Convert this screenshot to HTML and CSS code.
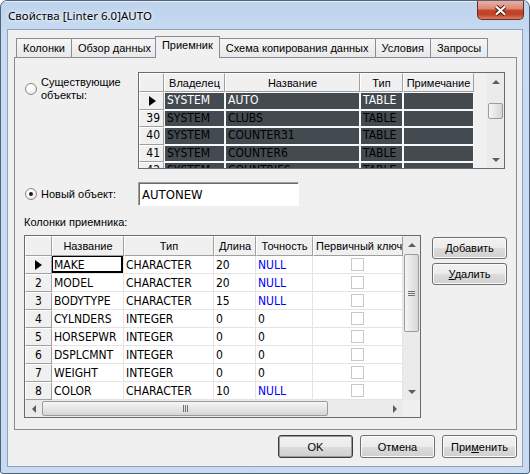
FILE: index.html
```html
<!DOCTYPE html>
<html>

<head>
  <meta charset="utf-8">
  <title>Свойства [Linter 6.0]AUTO</title>
  <link rel="stylesheet" href="styles.css">
</head>

<body>
  <div class="window">
    <div class="titlebar">
      <span class="title">Свойства [Linter 6.0]AUTO</span>
      <div class="close-btn">
        <svg width="13" height="11" viewBox="0 0 13 11">
          <path d="M2 1.5 L11 9.5 M11 1.5 L2 9.5" stroke="#4e1a12" stroke-width="4.2" />
          <path d="M2 1.5 L11 9.5 M11 1.5 L2 9.5" stroke="#fff" stroke-width="2.2" />
        </svg>
      </div>
    </div>

    <div class="client">
      <div class="tabs">
        <div class="tab">Колонки</div>
        <div class="tab">Обзор данных</div>
        <div class="tab active">Приемник</div>
        <div class="tab">Схема копирования данных</div>
        <div class="tab">Условия</div>
        <div class="tab">Запросы</div>
      </div>

      <div class="panel">
        <!-- existing objects -->
        <div class="source-row">
          <label class="radio-label two-lines">
            <span class="radio"></span>
            <span>Существующие<br>объекты:</span>
          </label>
          <div class="grid src-grid">
            <div class="table-area">
              <table class="src-table">
                <thead>
                  <tr>
                    <th class="c-ind"></th>
                    <th class="c-owner">Владелец</th>
                    <th class="c-name">Название</th>
                    <th class="c-type">Тип</th>
                    <th class="c-note">Примечание</th>
                  </tr>
                </thead>
                <tbody>
                  <tr class="current">
                    <td class="ind"><span class="pointer"></span></td>
                    <td>SYSTEM</td>
                    <td>AUTO</td>
                    <td>TABLE</td>
                    <td></td>
                  </tr>
                  <tr>
                    <td class="ind">39</td>
                    <td>SYSTEM</td>
                    <td>CLUBS</td>
                    <td>TABLE</td>
                    <td></td>
                  </tr>
                  <tr>
                    <td class="ind">40</td>
                    <td>SYSTEM</td>
                    <td>COUNTER31</td>
                    <td>TABLE</td>
                    <td></td>
                  </tr>
                  <tr>
                    <td class="ind">41</td>
                    <td>SYSTEM</td>
                    <td>COUNTER6</td>
                    <td>TABLE</td>
                    <td></td>
                  </tr>
                  <tr>
                    <td class="ind">42</td>
                    <td>SYSTEM</td>
                    <td>COUNTRIES</td>
                    <td>TABLE</td>
                    <td></td>
                  </tr>
                </tbody>
              </table>
            </div>
            <div class="vscroll">
              <div class="sb-btn"><span class="arr-up"></span></div>
              <div class="sb-track"><div class="thumb-v"></div></div>
              <div class="sb-btn"><span class="arr-down"></span></div>
            </div>
          </div>
        </div>

        <!-- new object -->
        <div class="new-row">
          <label class="radio-label">
            <span class="radio checked"></span>
            <span>Новый объект:</span>
          </label>
          <div class="text-input">AUTONEW</div>
        </div>

        <div class="section-label">Колонки приемника:</div>

        <div class="dest-row">
          <div class="grid dst-grid">
            <div class="table-area">
              <table class="dst-table">
                <thead>
                  <tr>
                    <th class="c-ind"></th>
                    <th class="c-name">Название</th>
                    <th class="c-type">Тип</th>
                    <th class="c-len">Длина</th>
                    <th class="c-prec">Точность</th>
                    <th class="c-key">Первичный ключ</th>
                  </tr>
                </thead>
                <tbody>
                  <tr>
                    <td class="ind"><span class="pointer"></span></td>
                    <td class="focus">MAKE</td>
                    <td>CHARACTER</td>
                    <td>20</td>
                    <td class="null">NULL</td>
                    <td class="key"><span class="check"></span></td>
                  </tr>
                  <tr>
                    <td class="ind">2</td>
                    <td>MODEL</td>
                    <td>CHARACTER</td>
                    <td>20</td>
                    <td class="null">NULL</td>
                    <td class="key"><span class="check"></span></td>
                  </tr>
                  <tr>
                    <td class="ind">3</td>
                    <td>BODYTYPE</td>
                    <td>CHARACTER</td>
                    <td>15</td>
                    <td class="null">NULL</td>
                    <td class="key"><span class="check"></span></td>
                  </tr>
                  <tr>
                    <td class="ind">4</td>
                    <td>CYLNDERS</td>
                    <td>INTEGER</td>
                    <td>0</td>
                    <td>0</td>
                    <td class="key"><span class="check"></span></td>
                  </tr>
                  <tr>
                    <td class="ind">5</td>
                    <td>HORSEPWR</td>
                    <td>INTEGER</td>
                    <td>0</td>
                    <td>0</td>
                    <td class="key"><span class="check"></span></td>
                  </tr>
                  <tr>
                    <td class="ind">6</td>
                    <td>DSPLCMNT</td>
                    <td>INTEGER</td>
                    <td>0</td>
                    <td>0</td>
                    <td class="key"><span class="check"></span></td>
                  </tr>
                  <tr>
                    <td class="ind">7</td>
                    <td>WEIGHT</td>
                    <td>INTEGER</td>
                    <td>0</td>
                    <td>0</td>
                    <td class="key"><span class="check"></span></td>
                  </tr>
                  <tr>
                    <td class="ind">8</td>
                    <td>COLOR</td>
                    <td>CHARACTER</td>
                    <td>10</td>
                    <td class="null">NULL</td>
                    <td class="key"><span class="check"></span></td>
                  </tr>
                </tbody>
              </table>
            </div>
            <div class="vscroll">
              <div class="sb-btn"><span class="arr-up"></span></div>
              <div class="sb-track"><div class="thumb-v"><span class="grip-v"></span></div></div>
              <div class="sb-btn"><span class="arr-down"></span></div>
            </div>
            <div class="hscroll">
              <div class="sb-btn"><span class="arr-left"></span></div>
              <div class="sb-track"><div class="thumb-h"><span class="grip-h"></span></div></div>
              <div class="sb-btn"><span class="arr-right"></span></div>
            </div>
            <div class="corner"></div>
          </div>

          <div class="side-buttons">
            <button class="btn"><u>Д</u>обавить</button>
            <button class="btn"><u>У</u>далить</button>
          </div>
        </div>
      </div>

      <div class="footer">
        <button class="btn btn-big default">OK</button>
        <button class="btn btn-big">Отмена</button>
        <button class="btn btn-big">При<u>м</u>енить</button>
      </div>
    </div>
  </div>
</body>

</html>
```

FILE: styles.css
```css
body {
  margin: 0;
  background: #fff;
  font-family: "Liberation Sans", Arial, sans-serif;
  font-size: 11px;
  color: #000;
}

/* window frame */
.window {
  width: 530px;
  height: 474px;
  box-sizing: border-box;
  border: 1px solid #52637a;
  border-radius: 7px 7px 3px 3px;
  background: linear-gradient(#bdd3ec, #c9dcf1 40px, #c7daf0);
  display: flex;
  flex-direction: column;
  overflow: hidden;
}

.titlebar {
  height: 28px;
  flex: none;
  display: flex;
  align-items: center;
  padding-left: 7px;
  box-shadow: inset 0 1px 0 #e4eefa;
}

.title {
  font-family: "Noto Sans", sans-serif;
  font-size: 11.5px;
  text-shadow: 0 0 6px #fff, 0 0 3px #fff;
}

.close-btn {
  align-self: flex-start;
  margin-left: auto;
  margin-right: 5px;
  width: 47px;
  height: 19px;
  box-sizing: border-box;
  border: 1px solid #6c2b22;
  border-top: none;
  border-radius: 0 0 5px 5px;
  background: linear-gradient(#eab0a2, #d98673 45%, #c6442c 50%, #c0432a 75%, #d9805f);
  display: flex;
  align-items: center;
  justify-content: center;
}

.client {
  flex: 1;
  margin: 0 6px 6px;
  border: 1px solid #8da3bd;
  background: #f0f0f0;
  padding: 6px 5px 0 6px;
  display: flex;
  flex-direction: column;
}

/* tabs */
.tabs {
  display: flex;
  align-items: flex-end;
  height: 21px;
  padding-left: 2px;
}

.tab {
  height: 19px;
  box-sizing: border-box;
  padding: 0 6px;
  border: 1px solid #898c95;
  border-bottom: none;
  margin-right: -1px;
  background: linear-gradient(#f6f6f6, #e8e8e8);
  line-height: 18px;
  white-space: nowrap;
}

.tab.active {
  position: relative;
  z-index: 1;
  height: 22px;
  margin: 0 -1px -1px -2px;
  padding: 0 6px;
  background: #f0f0f0;
  line-height: 17px;
}

.panel {
  height: 373px;
  box-sizing: border-box;
  border: 1px solid #898c95;
  background: #f0f0f0;
}

/* radio buttons */
.radio-label {
  width: 123px;
  box-sizing: border-box;
  flex: none;
  padding-left: 10px;
  display: flex;
  align-items: center;
  gap: 4px;
  line-height: 13px;
}

.radio {
  width: 12px;
  height: 12px;
  box-sizing: border-box;
  flex: none;
  border-radius: 50%;
  border: 1px solid #8a8a8a;
  background: radial-gradient(circle at 40% 35%, #fff 30%, #d8d8d8);
  display: flex;
  align-items: center;
  justify-content: center;
}

.radio.checked::after {
  content: "";
  width: 4px;
  height: 4px;
  border-radius: 50%;
  background: #1a1a1a;
}

.source-row {
  display: flex;
  margin-top: 14px;
}

.two-lines {
  align-self: flex-start;
  margin-top: 4px;
}

.new-row {
  display: flex;
  align-items: center;
  margin-top: 13px;
}

.text-input {
  width: 161px;
  height: 24px;
  box-sizing: border-box;
  border: 1px solid;
  border-color: #a0a0a0 #fff #fff #a0a0a0;
  box-shadow: inset 1px 1px 0 #6b6b6b;
  background: #fff;
  padding: 3px 0 0 3px;
  font-family: "DejaVu Sans Condensed", "DejaVu Sans", sans-serif;
  font-stretch: condensed;
  font-size: 13px;
  line-height: 17px;
}

.section-label {
  margin-top: 9px;
  padding-left: 9px;
  line-height: 15px;
}

.dest-row {
  display: flex;
  align-items: flex-start;
  margin-top: 5px;
  padding-left: 9px;
}

.side-buttons {
  display: flex;
  flex-direction: column;
  gap: 4px;
  margin: 2px 0 0 11px;
}

/* grids */
.grid {
  border: 1px solid #6b6b6b;
  background: #f0f0f0;
  display: grid;
  overflow: hidden;
}

.src-grid {
  grid-template-columns: 348px 17px;
  grid-template-rows: 95px;
}

.dst-grid {
  grid-template-columns: 378px 17px;
  grid-template-rows: 164px 17px;
}

.table-area {
  overflow: hidden;
}

table {
  border-collapse: separate;
  border-spacing: 0;
  table-layout: fixed;
}

th,
td {
  box-sizing: border-box;
  padding: 0 2px;
  overflow: hidden;
  white-space: nowrap;
}

th {
  font-weight: normal;
  background: #f0f0f0;
  border: 1px solid;
  border-color: #fff #a0a0a0 #a0a0a0 #fff;
  text-align: center;
  line-height: 16px;
}

td {
  font-family: "DejaVu Sans Condensed", "DejaVu Sans", sans-serif;
  font-stretch: condensed;
  font-size: 12px;
  line-height: 15px;
}

thead tr {
  height: 19px;
}

tbody tr {
  height: 18px;
}

.src-table {
  width: 335px;
}

.src-table tbody tr {
  height: 17.5px;
}

.src-table .c-ind { width: 25px; }
.src-table .c-owner { width: 61px; }
.src-table .c-name { width: 135px; }
.src-table .c-type { width: 43px; }
.src-table .c-note { width: 71px; }

.src-table td {
  background: #434b51;
  border: 1px solid #f8f8f8;
}

.src-table .current td {
  color: #fff;
}

.dst-table {
  width: 378px;
}

.dst-table thead tr {
  height: 20px;
}

.dst-table .c-ind { width: 27px; }
.dst-table .c-name { width: 72px; }
.dst-table .c-type { width: 90px; }
.dst-table .c-len { width: 42px; }
.dst-table .c-prec { width: 57px; }
.dst-table .c-key { width: 90px; }

.dst-table td {
  background: #fff;
  border-right: 1px solid #e4e4e4;
  border-bottom: 1px solid #e4e4e4;
  padding-top: 2px;
}

table td.ind {
  background: #f0f0f0;
  border: 1px solid;
  border-color: #fff #a0a0a0 #a0a0a0 #fff;
  color: #000;
  padding-top: 0;
}

.src-table td.ind {
  text-align: right;
  padding-right: 3px;
}

.dst-table td.ind {
  text-align: center;
}

.pointer {
  display: inline-block;
  vertical-align: middle;
  border-left: 7px solid #000;
  border-top: 5px solid transparent;
  border-bottom: 5px solid transparent;
}

.src-table .pointer {
  margin-right: 4px;
}

.null {
  color: #0000ff;
}

td.key {
  text-align: center;
  padding-top: 0;
}

.check {
  display: inline-block;
  vertical-align: middle;
  width: 13px;
  height: 13px;
  box-sizing: border-box;
  border: 1px solid #c8c8c8;
  background: #fff;
}

td.focus {
  position: relative;
}

td.focus::after {
  content: "";
  position: absolute;
  left: 0;
  top: 0;
  right: 0;
  bottom: 0;
  border: solid #000;
  border-width: 1px 2px 2px 1px;
}

/* scrollbars */
.vscroll {
  display: flex;
  flex-direction: column;
  background: #ebebeb;
}

.hscroll {
  display: flex;
  background: #ebebeb;
}

.sb-btn {
  width: 17px;
  height: 17px;
  flex: none;
  display: flex;
  align-items: center;
  justify-content: center;
}

.sb-track {
  flex: 1;
}

.thumb-v {
  margin: 0 1px;
  box-sizing: border-box;
  border: 1px solid #9b9b9b;
  border-radius: 2px;
  background: linear-gradient(to right, #f5f5f5, #e6e6e6 50%, #d6d6d6);
  display: flex;
  align-items: center;
  justify-content: center;
}

.src-grid .thumb-v {
  margin-top: 13px;
  height: 16px;
}

.dst-grid .thumb-v {
  margin-top: 1px;
  height: 78px;
}

.thumb-h {
  width: 286px;
  height: 15px;
  margin-top: 1px;
  box-sizing: border-box;
  border: 1px solid #9b9b9b;
  border-radius: 2px;
  background: linear-gradient(#f5f5f5, #e6e6e6 50%, #d6d6d6);
  display: flex;
  align-items: center;
  justify-content: center;
}

.grip-v {
  width: 7px;
  height: 5px;
  background: repeating-linear-gradient(#707070 0 1px, transparent 1px 2px);
}

.grip-h {
  width: 5px;
  height: 7px;
  background: repeating-linear-gradient(to right, #707070 0 1px, transparent 1px 2px);
}

.arr-up,
.arr-down {
  border-left: 4px solid transparent;
  border-right: 4px solid transparent;
}

.arr-up {
  border-bottom: 4px solid #5d5d5d;
}

.arr-down {
  border-top: 4px solid #5d5d5d;
}

.arr-left,
.arr-right {
  border-top: 4px solid transparent;
  border-bottom: 4px solid transparent;
}

.arr-left {
  border-right: 4px solid #5d5d5d;
}

.arr-right {
  border-left: 4px solid #5d5d5d;
}

.corner {
  background: #f0f0f0;
}

/* buttons */
.btn {
  width: 75px;
  height: 22px;
  box-sizing: border-box;
  border: 1px solid #707070;
  border-radius: 3px;
  background: linear-gradient(#f2f2f2, #ebebeb 50%, #dddddd 50%, #cfcfcf);
  box-shadow: inset 0 0 0 1px #fbfbfb;
  font-family: "Liberation Sans", Arial, sans-serif;
  font-size: 11px;
  color: #000;
  padding: 0;
}

.btn-big {
  height: 23px;
}

.btn.default {
  border-color: #3c3c3c;
  box-shadow: inset 0 0 0 1px #9a9a9a;
}

.footer {
  display: flex;
  justify-content: flex-end;
  gap: 7px;
  margin-top: 5px;
}
```
